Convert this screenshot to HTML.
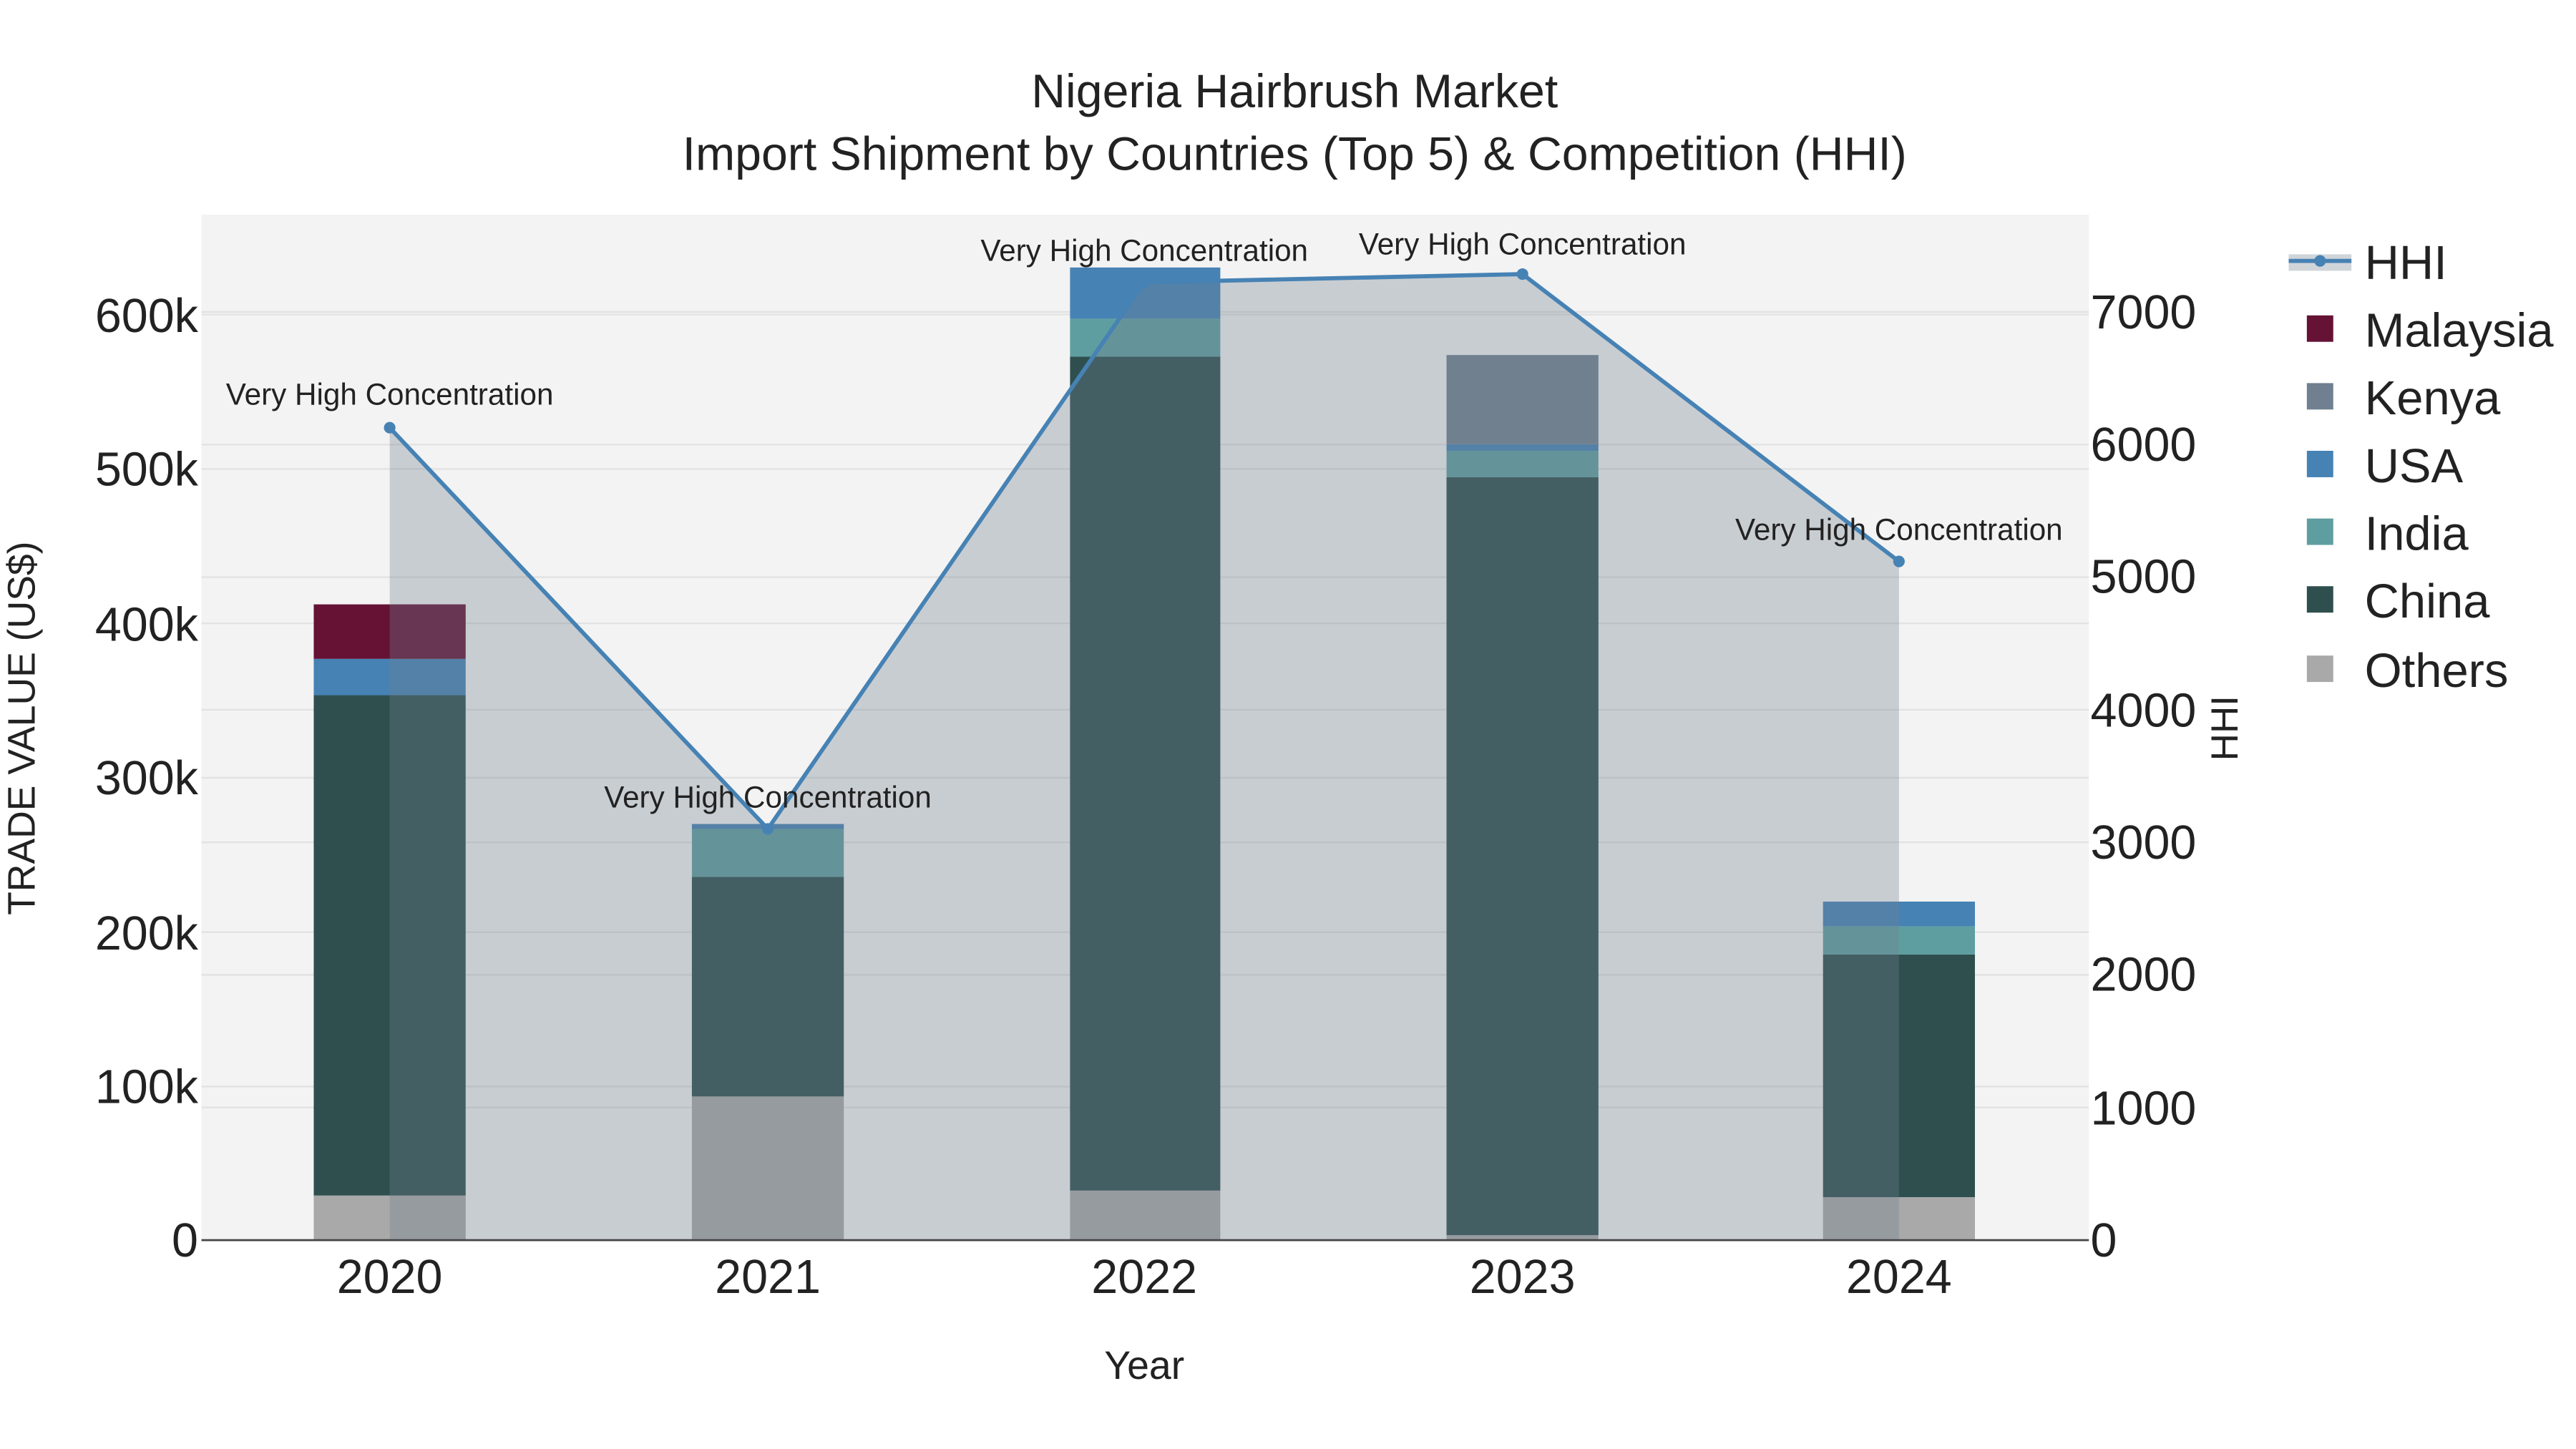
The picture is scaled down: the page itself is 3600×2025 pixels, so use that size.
<!DOCTYPE html>
<html><head><meta charset="utf-8"><style>
html,body{margin:0;padding:0;background:#fff;}
svg{display:block;}
text{font-family:"Liberation Sans",sans-serif;fill:#222;}
</style></head><body>
<svg width="3600" height="2025" viewBox="0 0 1560 877.5" xmlns="http://www.w3.org/2000/svg">
<rect width="1560" height="877.5" fill="#fff"/>
<rect x="122" y="130" width="1143" height="621" fill="#f3f3f3"/>
<g stroke="#e2e2e2" stroke-width="1">
<line x1="122" x2="1265" y1="658" y2="658"/><line x1="122" x2="1265" y1="564.5" y2="564.5"/>
<line x1="122" x2="1265" y1="471" y2="471"/><line x1="122" x2="1265" y1="377.5" y2="377.5"/>
<line x1="122" x2="1265" y1="284" y2="284"/><line x1="122" x2="1265" y1="190.5" y2="190.5"/>
<line x1="122" x2="1265" y1="670.7" y2="670.7"/><line x1="122" x2="1265" y1="590.4" y2="590.4"/>
<line x1="122" x2="1265" y1="510.1" y2="510.1"/><line x1="122" x2="1265" y1="429.8" y2="429.8"/>
<line x1="122" x2="1265" y1="349.5" y2="349.5"/><line x1="122" x2="1265" y1="269.2" y2="269.2"/>
<line x1="122" x2="1265" y1="188.9" y2="188.9"/>
</g>
<g>
<rect x="190" y="724" width="92" height="27" fill="#a9a9a9"/>
<rect x="190" y="421" width="92" height="303" fill="#2f4f4f"/>
<rect x="190" y="399" width="92" height="22" fill="#4682b4"/>
<rect x="190" y="366" width="92" height="33" fill="#651235"/>
<rect x="419" y="664" width="92" height="87" fill="#a9a9a9"/>
<rect x="419" y="531" width="92" height="133" fill="#2f4f4f"/>
<rect x="419" y="502" width="92" height="29" fill="#5f9ea0"/>
<rect x="419" y="499" width="92" height="3" fill="#4682b4"/>
<rect x="648" y="721" width="91" height="30" fill="#a9a9a9"/>
<rect x="648" y="216" width="91" height="505" fill="#2f4f4f"/>
<rect x="648" y="193" width="91" height="23" fill="#5f9ea0"/>
<rect x="648" y="162" width="91" height="31" fill="#4682b4"/>
<rect x="876" y="748" width="92" height="3" fill="#a9a9a9"/>
<rect x="876" y="289" width="92" height="459" fill="#2f4f4f"/>
<rect x="876" y="273" width="92" height="16" fill="#5f9ea0"/>
<rect x="876" y="269" width="92" height="4" fill="#4682b4"/>
<rect x="876" y="215" width="92" height="54" fill="#708090"/>
<rect x="1104" y="725" width="92" height="26" fill="#a9a9a9"/>
<rect x="1104" y="578" width="92" height="147" fill="#2f4f4f"/>
<rect x="1104" y="561" width="92" height="17" fill="#5f9ea0"/>
<rect x="1104" y="546" width="92" height="15" fill="#4682b4"/>
</g>
<polygon points="236,751 236,259 465,502 693,171 922,166 1150,340 1150,751" fill="rgba(112,128,144,0.33)"/>
<polyline points="236,259 465,502 693,171 922,166 1150,340" fill="none" stroke="#4682b4" stroke-width="2.5"/>
<g fill="#4682b4"><circle cx="236" cy="259" r="3.5"/><circle cx="465" cy="502" r="3.5"/><circle cx="693" cy="171" r="3.5"/><circle cx="922" cy="166" r="3.5"/><circle cx="1150" cy="340" r="3.5"/></g>
<line x1="122" x2="1265" y1="751" y2="751" stroke="#444" stroke-width="1.2"/>
<g font-size="18.3" text-anchor="middle">
<text x="236" y="245">Very High Concentration</text>
<text x="465" y="489">Very High Concentration</text>
<text x="693" y="158">Very High Concentration</text>
<text x="922" y="154">Very High Concentration</text>
<text x="1150" y="327">Very High Concentration</text>
</g>
<g text-anchor="middle" font-size="28.7">
<text x="784" y="65">Nigeria Hairbrush Market</text>
<text x="784" y="103">Import Shipment by Countries (Top 5) &amp; Competition (HHI)</text>
</g>
<g font-size="28.8" text-anchor="end">
<text x="120" y="761">0</text><text x="120" y="668">100k</text><text x="120" y="575">200k</text>
<text x="120" y="481">300k</text><text x="120" y="388">400k</text><text x="120" y="294">500k</text><text x="120" y="201">600k</text>
</g>
<g font-size="28.8" text-anchor="start">
<text x="1266" y="761">0</text><text x="1266" y="681">1000</text><text x="1266" y="600">2000</text>
<text x="1266" y="520">3000</text><text x="1266" y="440">4000</text><text x="1266" y="359">5000</text>
<text x="1266" y="279">6000</text><text x="1266" y="199">7000</text>
</g>
<g font-size="28.8" text-anchor="middle">
<text x="236" y="783">2020</text><text x="465" y="783">2021</text><text x="693" y="783">2022</text>
<text x="922" y="783">2023</text><text x="1150" y="783">2024</text>
</g>
<text x="693" y="835" font-size="24" text-anchor="middle">Year</text>
<text transform="translate(21,441) rotate(-90)" font-size="23.2" text-anchor="middle">TRADE VALUE (US$)</text>
<text transform="translate(1355,441) rotate(-90)" font-size="23" text-anchor="middle">HHI</text>
<rect x="1386" y="154" width="38" height="10" fill="rgba(112,128,144,0.33)"/>
<line x1="1386" x2="1424" y1="158" y2="158" stroke="#4682b4" stroke-width="2.5"/>
<circle cx="1405" cy="158" r="3.5" fill="#4682b4"/>
<g font-size="29">
<text x="1432" y="169">HHI</text>
<rect x="1397" y="191" width="16" height="16" fill="#651235"/><text x="1432" y="210">Malaysia</text>
<rect x="1397" y="232" width="16" height="16" fill="#708090"/><text x="1432" y="251">Kenya</text>
<rect x="1397" y="273" width="16" height="16" fill="#4682b4"/><text x="1432" y="292">USA</text>
<rect x="1397" y="314" width="16" height="16" fill="#5f9ea0"/><text x="1432" y="333">India</text>
<rect x="1397" y="355" width="16" height="16" fill="#2f4f4f"/><text x="1432" y="374">China</text>
<rect x="1397" y="397" width="16" height="16" fill="#a9a9a9"/><text x="1432" y="416">Others</text>
</g>
</svg>
</body></html>
